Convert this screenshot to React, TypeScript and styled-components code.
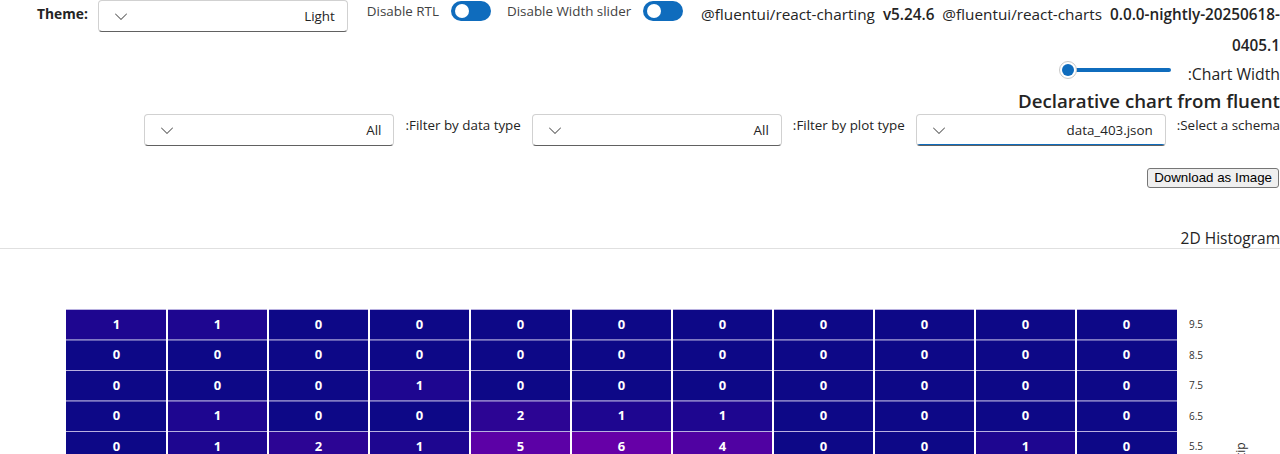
import React from "react";
import styled, { createGlobalStyle } from "styled-components";

const GlobalStyle = createGlobalStyle`
  html, body {
    margin: 0;
    padding: 0;
    overflow: hidden;
    background: #ffffff;
    font-family: "Open Sans", "Noto Sans", sans-serif;
    color: #242424;
  }
`;

const BASE = "13.4px";

const Page = styled.div`
  width: 1280px;
  height: 454px;
  overflow: hidden;
`;

const TopRow = styled.div`
  display: flex;
  align-items: flex-start;
  padding-left: 37px;
  height: 61px;
`;

const FieldLabel = styled.label`
  font-size: 13.8px;
  font-weight: 700;
  line-height: 28px;
  white-space: nowrap;
`;

const ThemeGroup = styled.div`
  display: flex;
  align-items: flex-start;
  gap: 10px;
  margin-right: 19px;
`;

const ToggleGroup = styled.div`
  display: flex;
  align-items: center;
  gap: 12px;
  height: 21px;
  margin-right: 16px;
`;

const ToggleText = styled.span`
  font-size: ${BASE};
  line-height: 20px;
  color: #424242;
  white-space: nowrap;
`;

const Switch = styled.span`
  position: relative;
  display: inline-block;
  width: 40px;
  height: 20px;
  border-radius: 10px;
  background: #0f6cbd;
  &::after {
    content: "";
    position: absolute;
    left: 4px;
    top: 3px;
    width: 14px;
    height: 14px;
    border-radius: 50%;
    background: #ffffff;
  }
`;

const Versions = styled.div`
  flex: 1;
  min-width: 0;
  text-align: right;
  font-size: 15.3px;
  line-height: 31px;
  margin-top: -1.5px;
  color: #242424;
`;

const Strong = styled.b`
  font-weight: 600;
`;

const Main = styled.div`
  direction: rtl;
  display: flex;
  flex-direction: column;
  align-items: flex-start;
`;

const SliderRow = styled.div`
  display: flex;
  align-items: center;
  gap: 17px;
  height: 20px;
`;

const SliderLabel = styled.span`
  font-size: 15.8px;
  line-height: 20px;
  padding-top: 6px;
  white-space: nowrap;
`;

const SliderTrack = styled.div`
  position: relative;
  width: 112px;
  height: 20px;
`;

const SliderRail = styled.div`
  position: absolute;
  right: 0;
  left: 10px;
  top: 7px;
  height: 4px;
  border-radius: 2px;
  background: #0f6cbd;
`;

const SliderThumb = styled.div`
  position: absolute;
  left: 0;
  top: 0;
  width: 18px;
  height: 18px;
  box-sizing: border-box;
  border-radius: 50%;
  background: #ffffff;
  border: 1px solid #c8c8c8;
  display: flex;
  align-items: center;
  justify-content: center;
  &::after {
    content: "";
    width: 12px;
    height: 12px;
    border-radius: 50%;
    background: #0f6cbd;
  }
`;

const Heading = styled.h2`
  margin: 7px 0 0 0;
  font-size: 18.7px;
  font-weight: 600;
  line-height: 26px;
  color: #242424;
  white-space: nowrap;
`;

const FilterRow = styled.div`
  display: flex;
  align-items: flex-start;
`;

const FilterLabel = styled.span`
  font-size: ${BASE};
  line-height: 20px;
  padding-top: 1px;
  margin-left: 11px;
  white-space: nowrap;
`;

const Dropdown = styled.div<{ $focused?: boolean; $gapAfter?: number }>`
  position: relative;
  box-sizing: border-box;
  width: 250px;
  height: 32px;
  margin-left: ${(p) => p.$gapAfter ?? 0}px;
  display: flex;
  align-items: center;
  justify-content: space-between;
  padding: 0 12px 0 12px;
  border: 1px solid #d1d1d1;
  border-bottom-color: #616161;
  border-radius: 4px;
  background: #ffffff;
  font-size: ${BASE};
  color: #242424;
  overflow: hidden;
  &::after {
    content: "";
    display: ${(p) => (p.$focused ? "block" : "none")};
    position: absolute;
    left: 0;
    right: 0;
    bottom: -1px;
    height: 2px;
    background: #0f6cbd;
  }
`;

const ThemeDropdown = styled(Dropdown)`
  direction: rtl;
`;

const DropdownValue = styled.span`
  white-space: nowrap;
`;

const Chevron = styled.svg`
  width: 20px;
  height: 20px;
  fill: #616161;
  flex: none;
`;

const ButtonRow = styled.div`
  margin-top: 19px;
  margin-right: 1px;
`;

const DownloadButton = styled.button`
  box-sizing: border-box;
  font-family: "Liberation Sans", Arial, sans-serif;
  font-size: 13.33px;
  line-height: 15px;
  padding: 1px 6px;
  height: 20px;
  color: #000000;
  background: #efefef;
  border: 1px solid #767676;
  border-radius: 3px;
`;

const ChartTitle = styled.div`
  margin-top: 40px;
  font-size: 15.5px;
  line-height: 20px;
  color: #242424;
`;

const Divider = styled.div`
  width: 1280px;
  height: 1px;
  background: #e0e0e0;
`;

const ChartSvg = styled.svg`
  display: block;
  direction: ltr;
`;

const ChevronDown = () => (
  <Chevron viewBox="0 0 20 20">
    <path d="M15.85 7.65c.2.2.2.5 0 .7l-5.5 5.5a.5.5 0 0 1-.7 0l-5.5-5.5a.5.5 0 0 1 .7-.7L10 12.79l5.15-5.14c.2-.2.5-.2.7 0Z" />
  </Chevron>
);

const rows: { label: string; values: number[] }[] = [
  { label: "9.5", values: [1, 1, 0, 0, 0, 0, 0, 0, 0, 0, 0] },
  { label: "8.5", values: [0, 0, 0, 0, 0, 0, 0, 0, 0, 0, 0] },
  { label: "7.5", values: [0, 0, 0, 1, 0, 0, 0, 0, 0, 0, 0] },
  { label: "6.5", values: [0, 1, 0, 0, 2, 1, 1, 0, 0, 0, 0] },
  { label: "5.5", values: [0, 1, 2, 1, 5, 6, 4, 0, 0, 1, 0] },
];

const palette: Record<number, string> = {
  0: "#0d0887",
  1: "#1e0690",
  2: "#2c0594",
  3: "#3b049a",
  4: "#5002a2",
  5: "#5c01a6",
  6: "#6600a7",
};

const COL_X = 66;
const COL_W = 101;
const ROW_Y = 60;
const ROW_H = 30.5;
const SVG_H = 210;

const Heatmap = () => (
  <ChartSvg width={1280} height={SVG_H} viewBox={`0 0 1280 ${SVG_H}`}>
    {rows.map((r, j) =>
      r.values.map((v, i) => (
        <g key={`${j}-${i}`}>
          <rect
            x={COL_X + i * COL_W}
            y={ROW_Y + j * ROW_H}
            width={COL_W}
            height={j === rows.length - 1 ? SVG_H - (ROW_Y + j * ROW_H) : ROW_H}
            fill={palette[v] ?? "#0d0887"}
          />
          <text
            x={COL_X + i * COL_W + COL_W / 2}
            y={ROW_Y + j * ROW_H + ROW_H / 2 + 4.5}
            textAnchor="middle"
            fill="#ffffff"
            fontSize={13}
            fontWeight={700}
            fontFamily='"Open Sans", "Noto Sans", sans-serif'
          >
            {v}
          </text>
        </g>
      ))
    )}
    {rows.map((_, j) => (
      <line
        key={`h${j}`}
        x1={COL_X}
        x2={COL_X + 11 * COL_W}
        y1={ROW_Y + j * ROW_H + 0.5}
        y2={ROW_Y + j * ROW_H + 0.5}
        stroke="#b8b0e0"
        strokeWidth={1}
      />
    ))}
    {Array.from({ length: 10 }).map((_, i) => (
      <line
        key={`v${i}`}
        x1={COL_X + (i + 1) * COL_W}
        x2={COL_X + (i + 1) * COL_W}
        y1={ROW_Y}
        y2={SVG_H}
        stroke="#ffffff"
        strokeWidth={2}
      />
    ))}
    {rows.map((r, j) => (
      <text
        key={`l${j}`}
        x={1189}
        y={ROW_Y + j * ROW_H + ROW_H / 2 + 4}
        fill="#323130"
        fontSize={10}
        fontFamily='"Open Sans", "Noto Sans", sans-serif'
      >
        {r.label}
      </text>
    ))}
    <text
      x={0}
      y={0}
      transform="translate(1245 208) rotate(-90)"
      fill="#323130"
      fontSize={12}
      fontFamily='"Open Sans", "Noto Sans", sans-serif'
    >
      tip
    </text>
  </ChartSvg>
);

export default function App() {
  return (
    <Page>
      <GlobalStyle />
      <TopRow>
        <ThemeGroup>
          <FieldLabel>Theme:</FieldLabel>
          <ThemeDropdown>
            <DropdownValue>Light</DropdownValue>
            <ChevronDown />
          </ThemeDropdown>
        </ThemeGroup>
        <ToggleGroup>
          <ToggleText>Disable RTL</ToggleText>
          <Switch />
        </ToggleGroup>
        <ToggleGroup>
          <ToggleText>Disable Width slider</ToggleText>
          <Switch />
        </ToggleGroup>
        <Versions>
          @fluentui/react-charting&nbsp; <Strong>v5.24.6</Strong>&nbsp; @fluentui/react-charts&nbsp;{" "}
          <Strong>
            0.0.0-nightly-20250618-
            <wbr />
            0405.1
          </Strong>
        </Versions>
      </TopRow>
      <Main dir="rtl">
        <SliderRow>
          <SliderLabel>Chart Width:</SliderLabel>
          <SliderTrack>
            <SliderRail />
            <SliderThumb />
          </SliderTrack>
        </SliderRow>
        <Heading>Declarative chart from fluent</Heading>
        <FilterRow>
          <FilterLabel>Select a schema:</FilterLabel>
          <Dropdown $focused $gapAfter={11}>
            <DropdownValue>data_403.json</DropdownValue>
            <ChevronDown />
          </Dropdown>
          <FilterLabel>Filter by plot type:</FilterLabel>
          <Dropdown $gapAfter={11}>
            <DropdownValue>All</DropdownValue>
            <ChevronDown />
          </Dropdown>
          <FilterLabel>Filter by data type:</FilterLabel>
          <Dropdown>
            <DropdownValue>All</DropdownValue>
            <ChevronDown />
          </Dropdown>
        </FilterRow>
        <ButtonRow>
          <DownloadButton>Download as Image</DownloadButton>
        </ButtonRow>
        <ChartTitle>2D Histogram</ChartTitle>
        <Divider />
        <Heatmap />
      </Main>
    </Page>
  );
}
